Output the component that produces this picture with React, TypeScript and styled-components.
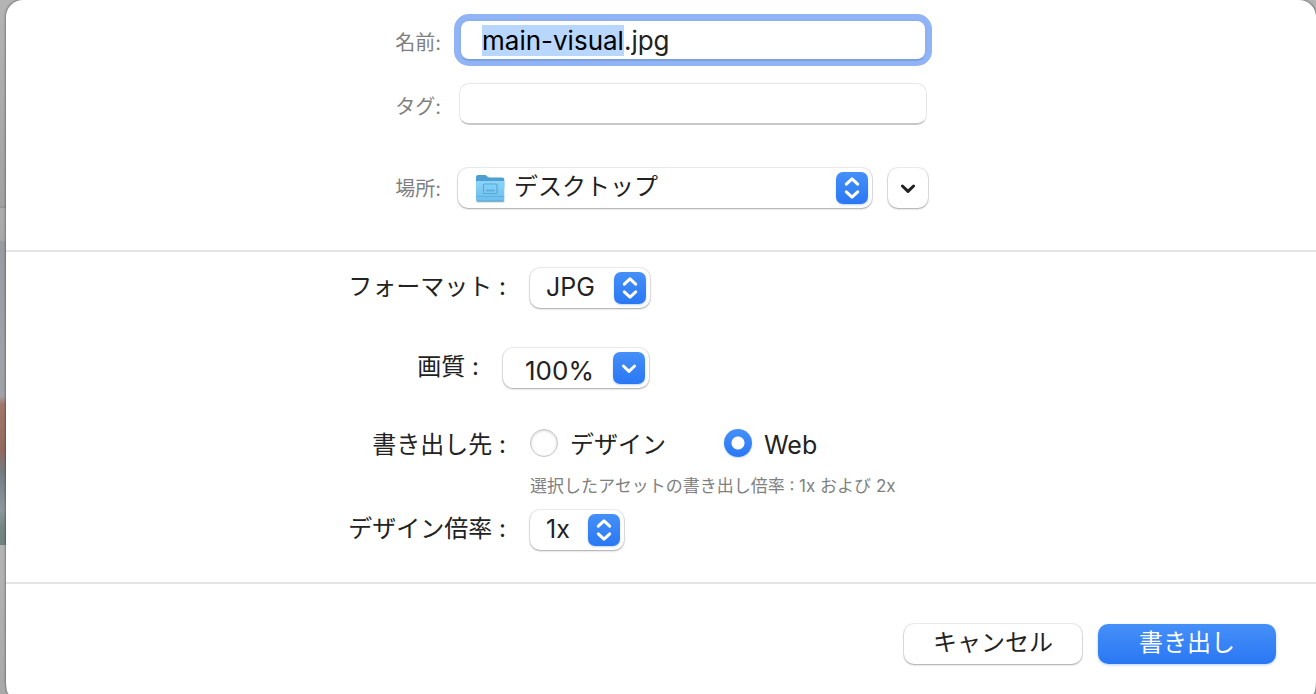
import React, { useEffect, useRef } from "react";
import styled, { createGlobalStyle, css } from "styled-components";

const GlobalStyle = createGlobalStyle`
  * { box-sizing: border-box; }
  body {
    margin: 0;
    color: #222;
    font-family: Inter, "Noto Sans CJK JP", sans-serif;
    font-size: 24px;
    line-height: 34px;
  }
  button, input, select { font: inherit; color: inherit; margin: 0; }
`;

const Backdrop = styled.div`
  display: flex;
  flex-direction: column;
  min-height: 100vh;
  padding-left: 6px;
  overflow: hidden;
  background: linear-gradient(
    #b4b4b4 0, #a2a2a2 206px, #989898 206px, #989898 208px,
    #adadad 208px, #a8a8a8 241px, #999da1 241px, #a0a3a7 396px,
    #a1776b 404px, #946a60 450px, #747c82 472px, #8d989e 510px,
    #768883 526px, #6f8480 545px, #b4b4b4 545px, #a9a9a9 100%
  );
`;

const Sheet = styled.form`
  flex: 1;
  display: flex;
  flex-direction: column;
  background: #fff;
  border-radius: 17px 17px 3px 3px / 17px 17px 13px 13px;
  box-shadow: 0 0 2px 1px rgba(0, 0, 0, 0.3);
`;

const FileSection = styled.section`
  display: flex;
  justify-content: center;
  padding: 19px 16px 41px;
  border-bottom: 2px solid #e4e4e4;
`;

const FileGrid = styled.div`
  display: grid;
  grid-template-columns: 48px 1fr;
  column-gap: 16px;
  row-gap: 22px;
  width: 100%;
  max-width: 536px;
`;

const FileLabel = styled.label<{ $spaced?: boolean }>`
  align-self: center;
  justify-self: end;
  padding-top: 6px;
  margin-top: ${(p) => (p.$spaced ? "16px" : "0")};
  font-size: 20px;
  line-height: 30px;
  white-space: nowrap;
  color: #7f7f7f;
`;

const TextField = styled.input`
  height: 42px;
  min-width: 0;
  margin: 0 2px;
  padding: 0 21px;
  border: 1px solid #e6e6e6;
  border-bottom: 2px solid #c8c8c8;
  border-radius: 10px;
  background: #fff;
  font-size: 26px;
  outline: none;

  &:focus {
    border: 2px solid #8db0f3;
    border-bottom-color: #7c9fe0;
    box-shadow: 0 0 0 5px #91b4f6;
  }
  &::selection {
    background: #b9d7fd;
    color: #000;
  }
`;

const LocationRow = styled.div`
  display: flex;
  gap: 16px;
  margin-top: 20px;
  padding: 1px;
`;

const raised = css`
  background: #fff;
  border-radius: 10px;
  box-shadow: 0 0 0 1px rgba(0, 0, 0, 0.07), 0 1px 2px rgba(0, 0, 0, 0.3);
`;

const Popup = styled.div<{ $grow?: boolean; $width?: number }>`
  ${raised}
  display: grid;
  align-items: center;
  height: 40px;
  ${(p) => (p.$grow ? "flex: 1; min-width: 0;" : `width: ${p.$width}px;`)}

  > * { grid-row: 1; grid-column: 1; }
`;

const PopupSelect = styled.select<{ $inset: number; $size?: number }>`
  appearance: none;
  width: 100%;
  height: 40px;
  padding: 0 36px 2px ${(p) => p.$inset}px;
  border: 0;
  border-radius: 10px;
  background: transparent;
  font-size: ${(p) => p.$size ?? 24}px;
`;

const Cap = styled.span`
  justify-self: end;
  display: grid;
  place-items: center;
  width: 32px;
  height: 32px;
  margin-right: 4px;
  border-radius: 7px;
  background: linear-gradient(#4590f8, #2a77f4);
  box-shadow: 0 1px 2px rgba(42, 119, 244, 0.3);
  pointer-events: none;
`;

const FolderSlot = styled.span`
  display: flex;
  padding-left: 17px;
  pointer-events: none;
`;

const ExpandButton = styled.button`
  ${raised}
  display: grid;
  place-items: center;
  width: 40px;
  height: 40px;
  padding: 0;
  border: 0;
`;

const OptionSection = styled.section`
  display: flex;
  justify-content: center;
  padding: 16px 16px 32px;
  border-bottom: 2px solid #e4e4e4;
`;

const OptionList = styled.div`
  display: flex;
  flex-direction: column;
  width: 100%;
  max-width: 628px;
`;

const OptionRow = styled.div<{ $label?: number; $after: number }>`
  display: grid;
  grid-template-columns: ${(p) => p.$label ?? 168}px 1fr;
  column-gap: 15px;
  align-items: center;
  min-height: 40px;
  margin-bottom: ${(p) => p.$after}px;
`;

const OptionLabel = styled.label<{ $low?: boolean }>`
  justify-self: end;
  padding: ${(p) => (p.$low ? "4px 9px 0 0" : "0 9px 2px 0")};
  white-space: nowrap;
`;

const Combo = styled.div`
  ${raised}
  display: flex;
  align-items: center;
  width: 146px;
  height: 40px;
`;

const ComboInput = styled.input`
  flex: 1;
  min-width: 0;
  height: 40px;
  padding: 4px 0 0 22px;
  border: 0;
  background: transparent;
  font-size: 26px;
  outline: none;
`;

const ComboButton = styled(Cap).attrs({ as: "button" })`
  padding: 0;
  border: 0;
  pointer-events: auto;
`;

const RadioGroup = styled.div`
  display: flex;
  gap: 58px;
`;

const RadioLabel = styled.label`
  display: flex;
  align-items: center;
  gap: 12px;
`;

const RadioText = styled.span<{ $size?: number }>`
  padding-top: 4px;
  font-size: ${(p) => p.$size ?? 24}px;
`;

const Radio = styled.input`
  appearance: none;
  width: 28px;
  height: 28px;
  border: 1px solid #c4c4c4;
  border-radius: 50%;
  background: #fff;
  box-shadow: inset 0 1px 3px rgba(0, 0, 0, 0.16);

  &:checked {
    border: 0;
    background: radial-gradient(circle, #fff 6px, transparent 7px),
      linear-gradient(#4590f8, #2a77f4);
    box-shadow: 0 1px 2px rgba(42, 119, 244, 0.3);
  }
`;

const Hint = styled.p`
  grid-column: 2;
  margin: 0;
  font-size: 17px;
  line-height: 24px;
  white-space: nowrap;
  color: #808080;
`;

const HintRow = styled(OptionRow)`
  min-height: 24px;
`;

const Footer = styled.footer`
  display: flex;
  justify-content: flex-end;
  gap: 16px;
  padding: 40px 40px 30px;
`;

const ActionButton = styled.button<{ $primary?: boolean }>`
  ${raised}
  width: 178px;
  height: 40px;
  padding: 0 0 2px;
  border: 0;
  ${(p) =>
    p.$primary &&
    css`
      background: linear-gradient(#4590f8, #2a77f4);
      box-shadow: 0 1px 3px rgba(42, 119, 244, 0.35);
      color: #fff;
    `}
`;

const UpDownIcon = () => (
  <svg width="32" height="32" viewBox="0 0 32 32" fill="none" stroke="#fff" strokeWidth="3" strokeLinecap="round" strokeLinejoin="round" aria-hidden="true">
    <path d="M10.3 12.2 16 6.800l5.7 5.400M10.3 19.800l5.7 5.400 5.7-5.400" />
  </svg>
);

const DownIcon = ({ color }: { color: string }) => (
  <svg width="32" height="32" viewBox="0 0 32 32" fill="none" stroke={color} strokeWidth="3" strokeLinecap="round" strokeLinejoin="round" aria-hidden="true">
    <path d="M10.4 14 16 19.4l5.6-5.4" />
  </svg>
);

const FolderIcon = () => (
  <svg width="30" height="30" viewBox="0 0 30 30" aria-hidden="true">
    <defs>
      <linearGradient id="folderFront" x1="0" y1="0" x2="0" y2="1">
        <stop offset="0" stopColor="#8ad4f9" />
        <stop offset="1" stopColor="#6bbdec" />
      </linearGradient>
    </defs>
    <rect x="1.500" y="27" width="28" height="2.500" rx="1.200" fill="#000" opacity="0.22" />
    <path d="M1 4.200C1 2.800 1.800 2 3.200 2h6.200c1.100 0 1.700.3 2.400.9l.9.8c.6.500 1.100.7 2 .7h12.300c1.500 0 2.300.8 2.300 2.200V15H1z" fill="#4d9fd0" />
    <path d="M1 9.200C1 8.500 1.500 8 2.200 8h25.900c.7 0 1.200.5 1.200 1.200V26.500c0 1.200-.8 2-2 2H3c-1.200 0-2-.8-2-2z" fill="url(#folderFront)" />
    <path d="M1 23.500h28.300" stroke="#5fb0df" strokeWidth="1" />
    <path d="M2 28h26.500" stroke="#5aa6d2" strokeWidth="1" />
    <rect x="8.500" y="11" width="13.500" height="9.500" rx="1" fill="none" stroke="#56a9da" strokeWidth="1.200" />
    <path d="M11 17.500h8.500" stroke="#56a9da" strokeWidth="1.500" />
  </svg>
);

export default function App() {
  const nameRef = useRef<HTMLInputElement>(null);

  useEffect(() => {
    const field = nameRef.current;
    if (!field) return;
    field.focus();
    field.setSelectionRange(0, field.value.lastIndexOf("."));
  }, []);

  return (
    <>
      <GlobalStyle />
      <Backdrop>
        <Sheet onSubmit={(e) => e.preventDefault()}>
          <FileSection>
            <FileGrid>
              <FileLabel htmlFor="name">名前:</FileLabel>
              <TextField id="name" ref={nameRef} defaultValue="main-visual.jpg" spellCheck={false} autoComplete="off" />
              <FileLabel htmlFor="tags">タグ:</FileLabel>
              <TextField id="tags" autoComplete="off" />
              <FileLabel htmlFor="place" $spaced>場所:</FileLabel>
              <LocationRow>
                <Popup $grow>
                  <PopupSelect id="place" $inset={56}>
                    <option>デスクトップ</option>
                  </PopupSelect>
                  <FolderSlot><FolderIcon /></FolderSlot>
                  <Cap><UpDownIcon /></Cap>
                </Popup>
                <ExpandButton type="button" aria-label="詳細を表示">
                  <DownIcon color="#222" />
                </ExpandButton>
              </LocationRow>
            </FileGrid>
          </FileSection>

          <OptionSection>
            <OptionList>
              <OptionRow $after={40}>
                <OptionLabel htmlFor="format">フォーマット :</OptionLabel>
                <Popup $width={120}>
                  <PopupSelect id="format" $inset={16} $size={25}>
                    <option>JPG</option>
                  </PopupSelect>
                  <Cap><UpDownIcon /></Cap>
                </Popup>
              </OptionRow>
              <OptionRow $label={141} $after={35}>
                <OptionLabel htmlFor="quality">画質 :</OptionLabel>
                <Combo>
                  <ComboInput id="quality" defaultValue="100%" />
                  <ComboButton type="button" aria-label="画質の候補">
                    <DownIcon color="#fff" />
                  </ComboButton>
                </Combo>
              </OptionRow>
              <OptionRow $after={11} role="radiogroup" aria-labelledby="target">
                <OptionLabel as="span" id="target" $low>書き出し先 :</OptionLabel>
                <RadioGroup>
                  <RadioLabel>
                    <Radio type="radio" name="target" />
                    <RadioText>デザイン</RadioText>
                  </RadioLabel>
                  <RadioLabel>
                    <Radio type="radio" name="target" defaultChecked />
                    <RadioText $size={25}>Web</RadioText>
                  </RadioLabel>
                </RadioGroup>
              </OptionRow>
              <HintRow $after={12}>
                <Hint>選択したアセットの書き出し倍率 : 1x および 2x</Hint>
              </HintRow>
              <OptionRow $after={0}>
                <OptionLabel htmlFor="scale">デザイン倍率 :</OptionLabel>
                <Popup $width={94}>
                  <PopupSelect id="scale" $inset={16} $size={25}>
                    <option>1x</option>
                  </PopupSelect>
                  <Cap><UpDownIcon /></Cap>
                </Popup>
              </OptionRow>
            </OptionList>
          </OptionSection>

          <Footer>
            <ActionButton type="button">キャンセル</ActionButton>
            <ActionButton type="submit" $primary>書き出し</ActionButton>
          </Footer>
        </Sheet>
      </Backdrop>
    </>
  );
}
